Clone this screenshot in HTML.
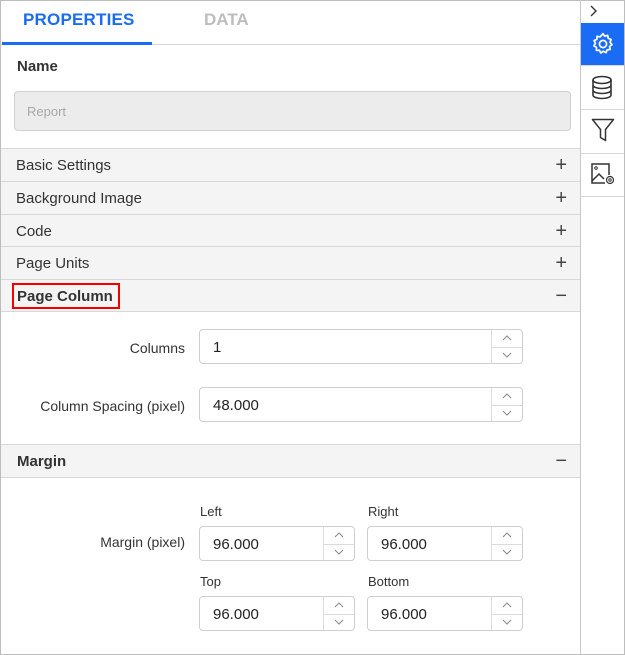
<!DOCTYPE html>
<html><head><style>
*{box-sizing:border-box;margin:0;padding:0}
body{width:625px;height:655px;background:#fff;font-family:"Liberation Sans",sans-serif;color:#333;position:relative;overflow:hidden}
.a{position:absolute}
.hdr{position:absolute;left:1px;width:579px;background:#f4f4f4;border-top:1px solid #d8d8d8;font-size:15px;color:#333}
.hdr span{position:absolute;left:15px;top:8px}
.hdr b{position:absolute;right:13px;top:5px;font-weight:normal;font-size:20px;color:#444}
.sp{position:absolute;border:1px solid #cfcfcf;border-radius:4px;background:#fff;font-size:15px;color:#222}
.sp .v{position:absolute;left:13px;top:9px}
.sp .btn{position:absolute;right:0;top:0;bottom:0;width:31px;border-left:1px solid #dcdcdc}
.sp .btn:after{content:"";position:absolute;left:0;right:0;top:50%;border-top:1px solid #dcdcdc}
.sp .btn svg{position:absolute;left:10px}
.lbl{position:absolute;font-size:14px;color:#333}
</style></head><body>
<div class="a" style="left:0;top:0;width:625px;height:655px;border:1px solid #bdbdbd"></div>
<div class="a" style="left:580px;top:0;width:1px;height:655px;background:#c8c8c8"></div>
<div class="a" style="left:23px;top:10px;font-size:17px;color:#1a6cf5;font-weight:bold;letter-spacing:0.2px">PROPERTIES</div>
<div class="a" style="left:204px;top:10px;font-size:17px;color:#bdbdbd;font-weight:bold">DATA</div>
<div class="a" style="left:1px;top:44px;width:579px;height:1px;background:#d8d8d8"></div>
<div class="a" style="left:2px;top:42px;width:150px;height:3px;background:#1a6cf5"></div>
<div class="a" style="left:17px;top:58px;font-size:15px;font-weight:bold;color:#333">Name</div>
<div class="a" style="left:14px;top:91px;width:557px;height:40px;background:#ececec;border:1px solid #d0d0d0;border-radius:4px"><span style="position:absolute;left:12px;top:12px;font-size:13px;color:#a8a8a8">Report</span></div>
<div class="hdr" style="top:148px;height:34px"><span>Basic Settings</span><b>+</b></div>
<div class="hdr" style="top:181px;height:33px"><span>Background Image</span><b>+</b></div>
<div class="hdr" style="top:214px;height:33px"><span>Code</span><b>+</b></div>
<div class="hdr" style="top:246px;height:33px"><span>Page Units</span><b>+</b></div>
<div class="hdr" style="top:279px;height:33px;border-bottom:1px solid #d8d8d8"><span style="font-weight:bold;left:16px">Page Column</span><b>−</b></div>
<div class="a" style="left:12px;top:283px;width:108px;height:26px;border:2px solid #e00"></div>
<div class="lbl" style="right:440px;top:340px">Columns</div>
<div class="sp" style="left:199px;top:329px;width:324px;height:35px"><span class="v">1</span><div class="btn"><svg style="top:5px" width="10" height="6"><path d="M1 5L5 1L9 5" stroke="#888" fill="none"/></svg><svg style="top:22px" width="10" height="6"><path d="M1 1L5 5L9 1" stroke="#888" fill="none"/></svg></div></div>
<div class="lbl" style="right:440px;top:398px">Column Spacing (pixel)</div>
<div class="sp" style="left:199px;top:387px;width:324px;height:35px"><span class="v">48.000</span><div class="btn"><svg style="top:5px" width="10" height="6"><path d="M1 5L5 1L9 5" stroke="#888" fill="none"/></svg><svg style="top:22px" width="10" height="6"><path d="M1 1L5 5L9 1" stroke="#888" fill="none"/></svg></div></div>
<div class="hdr" style="top:444px;height:34px;border-bottom:1px solid #d8d8d8"><span style="font-weight:bold;left:16px">Margin</span><b>−</b></div>
<div class="lbl" style="right:440px;top:534px">Margin (pixel)</div>
<div class="lbl" style="left:200px;top:504px;font-size:13px">Left</div>
<div class="lbl" style="left:368px;top:504px;font-size:13px">Right</div>
<div class="lbl" style="left:200px;top:574px;font-size:13px">Top</div>
<div class="lbl" style="left:368px;top:574px;font-size:13px">Bottom</div>
<div class="sp" style="left:199px;top:526px;width:156px;height:35px"><span class="v">96.000</span><div class="btn"><svg style="top:5px" width="10" height="6"><path d="M1 5L5 1L9 5" stroke="#888" fill="none"/></svg><svg style="top:22px" width="10" height="6"><path d="M1 1L5 5L9 1" stroke="#888" fill="none"/></svg></div></div>
<div class="sp" style="left:367px;top:526px;width:156px;height:35px"><span class="v">96.000</span><div class="btn"><svg style="top:5px" width="10" height="6"><path d="M1 5L5 1L9 5" stroke="#888" fill="none"/></svg><svg style="top:22px" width="10" height="6"><path d="M1 1L5 5L9 1" stroke="#888" fill="none"/></svg></div></div>
<div class="sp" style="left:199px;top:596px;width:156px;height:35px"><span class="v">96.000</span><div class="btn"><svg style="top:5px" width="10" height="6"><path d="M1 5L5 1L9 5" stroke="#888" fill="none"/></svg><svg style="top:22px" width="10" height="6"><path d="M1 1L5 5L9 1" stroke="#888" fill="none"/></svg></div></div>
<div class="sp" style="left:367px;top:596px;width:156px;height:35px"><span class="v">96.000</span><div class="btn"><svg style="top:5px" width="10" height="6"><path d="M1 5L5 1L9 5" stroke="#888" fill="none"/></svg><svg style="top:22px" width="10" height="6"><path d="M1 1L5 5L9 1" stroke="#888" fill="none"/></svg></div></div>
<svg class="a" style="left:588px;top:4px" width="10" height="14"><path d="M3 2L8 7L3 12" stroke="#333" stroke-width="1.4" fill="none"/></svg>
<div class="a" style="left:581px;top:23px;width:43px;height:42px;background:#1a6cf5"></div>
<svg class="a" style="left:590px;top:31px" width="26" height="26" viewBox="0 0 24 24"><path d="M12 2.5l1.6 2.3 2.7-.8.5 2.8 2.7 1-1 2.6 1.8 2.2-2.2 1.7.5 2.8-2.8.3-1 2.6-2.5-1.3-2.3 1.6-1.3-2.5-2.8.1.1-2.8-2.4-1.4 1.4-2.4-1.3-2.5 2.6-1 .2-2.8 2.8.4z" fill="none" stroke="#fff" stroke-width="1.6" stroke-linejoin="round"/><circle cx="12" cy="12" r="3.3" fill="none" stroke="#fff" stroke-width="1.6"/></svg>
<div class="a" style="left:581px;top:65px;width:43px;height:1px;background:#d8d8d8"></div>
<svg class="a" style="left:591px;top:75px" width="22" height="25" viewBox="0 0 22 25"><ellipse cx="11" cy="5" rx="9" ry="3.5" fill="none" stroke="#333" stroke-width="1.6"/><path d="M2 5v15c0 2 4 3.5 9 3.5s9-1.5 9-3.5V5M2 10c0 2 4 3.5 9 3.5s9-1.5 9-3.5M2 15c0 2 4 3.5 9 3.5s9-1.5 9-3.5" fill="none" stroke="#333" stroke-width="1.6"/></svg>
<div class="a" style="left:581px;top:109px;width:43px;height:1px;background:#d8d8d8"></div>
<svg class="a" style="left:591px;top:118px" width="24" height="24" viewBox="0 0 24 24"><path d="M1.5 1.5h21l-8 10v11l-5-3v-8z" fill="none" stroke="#333" stroke-width="1.5" stroke-linejoin="round"/></svg>
<div class="a" style="left:581px;top:153px;width:43px;height:1px;background:#d8d8d8"></div>
<svg class="a" style="left:590px;top:162px" width="26" height="24" viewBox="0 0 26 24"><path d="M15 21H2V2h17v11" fill="none" stroke="#333" stroke-width="1.5"/><circle cx="6" cy="6" r="1.3" fill="none" stroke="#333"/><path d="M2 19l7-7 5 5" fill="none" stroke="#333" stroke-width="1.5"/><circle cx="20" cy="18" r="3.5" fill="none" stroke="#333" stroke-width="1.2"/><circle cx="20" cy="18" r="1.2" fill="none" stroke="#333"/></svg>
<div class="a" style="left:581px;top:196px;width:43px;height:1px;background:#d8d8d8"></div>
</body></html>
